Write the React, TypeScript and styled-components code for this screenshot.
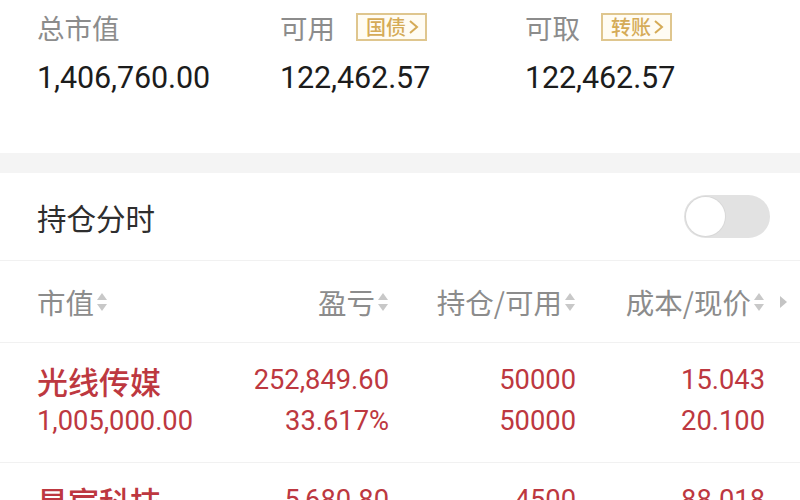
import React from "react";
import styled, { createGlobalStyle } from "styled-components";

const Global = createGlobalStyle`
  html, body { margin: 0; padding: 0; background: #fff; }
  body { font-family: Roboto, "Noto Sans CJK SC", sans-serif; -webkit-font-smoothing: antialiased; }
  #root { width: 800px; height: 500px; overflow: hidden; }
`;

const Page = styled.div`
  width: 800px;
  background: #fff;
`;

const Summary = styled.section`
  display: grid;
  grid-template-columns: 243px 245px 1fr;
  grid-template-rows: 32px 36px;
  row-gap: 17px;
  padding: 11px 37px 57px;
`;

const LabelLine = styled.div`
  display: flex;
  align-items: center;
  gap: 21px;
`;

const Label = styled.span`
  font-family: "Noto Sans CJK SC", sans-serif;
  font-size: 27.5px;
  line-height: 32px;
  color: #8c8c8c;
`;

const Badge = styled.span`
  display: inline-flex;
  align-items: center;
  height: 28px;
  box-sizing: border-box;
  padding: 0 6px 0 8px;
  border: 2px solid #dfc68e;
  background: #fffcf3;
  color: #d5ab57;
  font-family: "Noto Sans CJK SC", sans-serif;
  font-size: 20px;
  font-weight: 500;
  line-height: 1;
  gap: 2px;
`;

const Value = styled.div`
  font-family: Roboto, sans-serif;
  font-size: 30.5px;
  line-height: 36px;
  color: #1c1c1c;
  letter-spacing: -0.1px;
`;

const Band = styled.div`
  height: 20px;
  background: #f4f4f4;
`;

const ToggleRow = styled.div`
  display: flex;
  align-items: center;
  justify-content: space-between;
  height: 87px;
  padding: 0 30px 0 37px;
  border-bottom: 1px solid #f1f1f1;
`;

const RowTitle = styled.span`
  font-family: "Noto Sans CJK SC", sans-serif;
  font-size: 29.5px;
  color: #2e2e2e;
`;

const Track = styled.div`
  width: 86px;
  height: 43px;
  border-radius: 22px;
  background: #e2e2e2;
  display: flex;
  align-items: center;
  padding: 0 2px;
  box-sizing: border-box;
`;

const Knob = styled.div`
  width: 39px;
  height: 39px;
  border-radius: 50%;
  background: #fff;
  box-shadow: 0 0 0 1px #d8d8d8;
`;

const Grid = styled.div<{ $head?: boolean }>`
  display: grid;
  grid-template-columns: 160px 192px 187px 189px 23px;
  padding: ${(p) => (p.$head ? "0" : "17px")} 12px ${(p) => (p.$head ? "0" : "20px")} 37px;
  height: ${(p) => (p.$head ? "81px" : "auto")};
  align-items: center;
  border-bottom: 1px solid #f1f1f1;
`;

const HeadCell = styled.div<{ $right?: boolean }>`
  display: flex;
  align-items: center;
  justify-content: ${(p) => (p.$right ? "flex-end" : "flex-start")};
  font-family: "Noto Sans CJK SC", sans-serif;
  font-size: 28.5px;
  color: #8c8c8c;
  gap: 2px;
`;

const Cell = styled.div<{ $right?: boolean }>`
  display: flex;
  flex-direction: column;
  align-items: ${(p) => (p.$right ? "flex-end" : "flex-start")};
`;

const Line = styled.span<{ $cjk?: boolean }>`
  height: 41px;
  line-height: 41px;
  font-family: ${(p) => (p.$cjk ? '"Noto Sans CJK SC", sans-serif' : "Roboto, sans-serif")};
  font-size: ${(p) => (p.$cjk ? "31px" : "27.3px")};
  font-weight: ${(p) => (p.$cjk ? 500 : 400)};
  color: #bd3840;
  white-space: nowrap;
`;

const Sort = () => (
  <svg width="12" height="22" viewBox="0 0 12 22">
    <path d="M6 2 L11 9 H1 Z" fill="#c8c8c8" />
    <path d="M6 20 L11 13 H1 Z" fill="#c8c8c8" />
  </svg>
);

const Caret = () => (
  <svg width="9" height="14" viewBox="0 0 9 14">
    <path d="M1 1 L8 7 L1 13 Z" fill="#c4c4c4" />
  </svg>
);

const Chevron = () => (
  <svg width="11" height="16" viewBox="0 0 11 16">
    <path d="M2 2 L9 8 L2 14" fill="none" stroke="#d5ab57" strokeWidth="2" />
  </svg>
);

const rows = [
  { name: "光线传媒", mv: "1,005,000.00", pl: "252,849.60", pct: "33.617%", hold: "50000", avail: "50000", cost: "15.043", price: "20.100" },
  { name: "星宸科技", mv: "", pl: "5,680.80", pct: "", hold: "4500", avail: "", cost: "88.018", price: "" },
];

export default function App() {
  return (
    <Page>
      <Global />
      <Summary>
        <LabelLine><Label>总市值</Label></LabelLine>
        <LabelLine><Label>可用</Label><Badge>国债<Chevron /></Badge></LabelLine>
        <LabelLine><Label>可取</Label><Badge>转账<Chevron /></Badge></LabelLine>
        <Value>1,406,760.00</Value>
        <Value>122,462.57</Value>
        <Value>122,462.57</Value>
      </Summary>
      <Band />
      <ToggleRow>
        <RowTitle>持仓分时</RowTitle>
        <Track><Knob /></Track>
      </ToggleRow>
      <Grid $head>
        <HeadCell>市值<Sort /></HeadCell>
        <HeadCell $right>盈亏<Sort /></HeadCell>
        <HeadCell $right>持仓/可用<Sort /></HeadCell>
        <HeadCell $right>成本/现价<Sort /></HeadCell>
        <HeadCell $right><Caret /></HeadCell>
      </Grid>
      {rows.map((r) => (
        <Grid key={r.name}>
          <Cell>
            <Line $cjk>{r.name}</Line>
            <Line>{r.mv}</Line>
          </Cell>
          <Cell $right>
            <Line>{r.pl}</Line>
            <Line>{r.pct}</Line>
          </Cell>
          <Cell $right>
            <Line>{r.hold}</Line>
            <Line>{r.avail}</Line>
          </Cell>
          <Cell $right>
            <Line>{r.cost}</Line>
            <Line>{r.price}</Line>
          </Cell>
          <Cell />
        </Grid>
      ))}
    </Page>
  );
}
